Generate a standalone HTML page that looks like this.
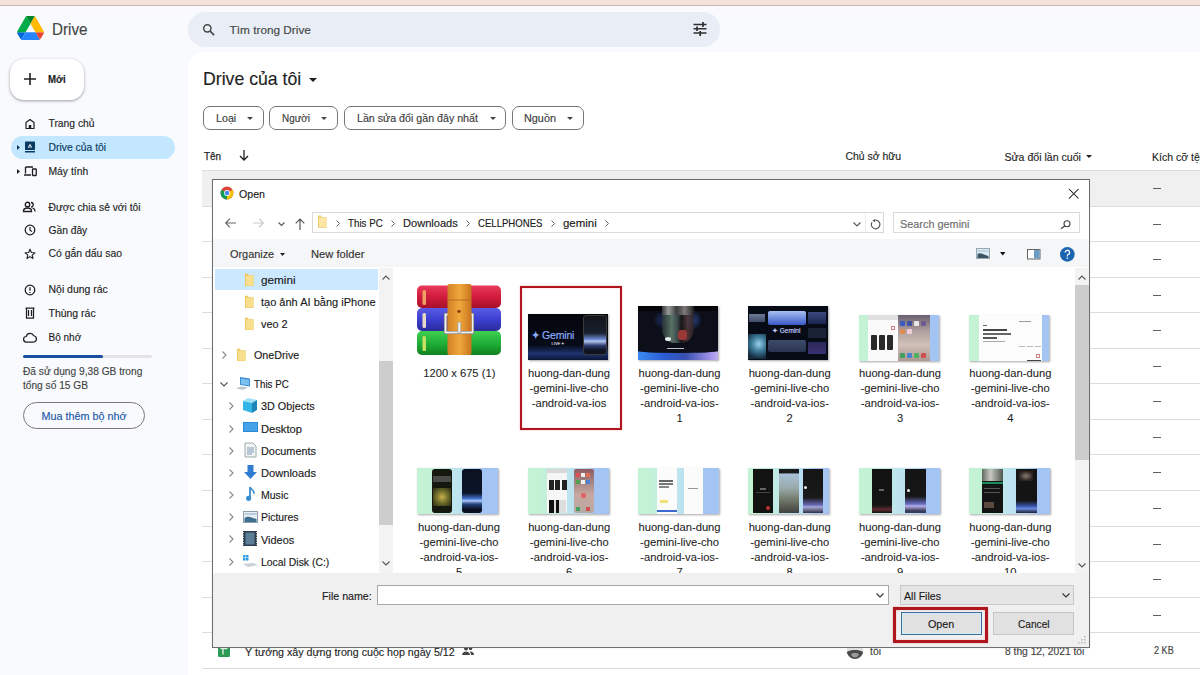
<!DOCTYPE html><html><head><meta charset="utf-8"><style>
*{margin:0;padding:0;box-sizing:border-box}
html,body{width:1200px;height:675px;overflow:hidden}
body{position:relative;background:#f8fafd;font-family:"Liberation Sans",sans-serif;color:#1f1f1f}
.a{position:absolute}
.t{position:absolute;white-space:nowrap;line-height:1;-webkit-text-stroke:0.15px currentColor}
svg{position:absolute;overflow:visible}
</style></head><body>
<div class="a" style="left:0px;top:0px;width:1200px;height:5px;background:#f4e2d8"></div>
<div class="a" style="left:0px;top:5px;width:1200px;height:1px;background:#c4b8b8"></div>
<div class="a" style="left:0px;top:6px;width:1200px;height:4px;background:#fbf9fd"></div>
<svg style="left:17px;top:16px" width="27" height="24" viewBox="0 0 87.3 78">
<path d="m6.6 66.85 3.85 6.65c.8 1.4 1.95 2.5 3.3 3.3l13.75-23.8h-27.5c0 1.550.4 3.1 1.2 4.5z" fill="#0066da"/>
<path d="m43.65 25-13.75-23.8c-1.35.8-2.5 1.9-3.3 3.3l-25.4 44a9.06 9.06 0 0 0 -1.2 4.5h27.5z" fill="#00ac47"/>
<path d="m73.55 76.8c1.35-.8 2.5-1.9 3.3-3.3l1.6-2.750 7.65-13.25c.8-1.4 1.2-2.95 1.2-4.5h-27.502l5.852 11.5z" fill="#ea4335"/>
<path d="m43.65 25 13.75-23.8c-1.35-.8-2.9-1.2-4.5-1.2h-18.5c-1.6 0-3.15.45-4.5 1.2z" fill="#00832d"/>
<path d="m59.8 53h-32.3l-13.75 23.8c1.35.8 2.9 1.2 4.5 1.2h50.8c1.6 0 3.15-.45 4.5-1.2z" fill="#2684fc"/>
<path d="m73.4 26.5-12.7-22c-.8-1.4-1.950-2.5-3.3-3.3l-13.75 23.8 16.15 28h27.45c0-1.55-.4-3.1-1.2-4.5z" fill="#ffba00"/>
</svg>
<div class="t" style="left:52px;top:21.55px;font-size:15.9px;color:#444746;font-weight:normal;transform:scaleX(0.9568);transform-origin:0 0;">Drive</div>
<div class="a" style="left:10px;top:59px;width:74px;height:41px;background:#fff;border-radius:14px;box-shadow:0 1px 2px rgba(60,64,67,.3),0 1px 3px 1px rgba(60,64,67,.15)"></div>
<svg style="left:24px;top:73px" width="12" height="12" viewBox="0 0 12 12"><path d="M6 0v12M0 6h12" stroke="#1f1f1f" stroke-width="1.6"/></svg>
<div class="t" style="left:48.3px;top:75.30px;font-size:10px;color:#1f1f1f;font-weight:bold;transform:scaleX(0.9715);transform-origin:0 0;">Mới</div>
<div class="a" style="left:10.5px;top:135.5px;width:164.5px;height:23.5px;background:#c2e7ff;border-radius:12px"></div>
<div class="t" style="left:48.5px;top:119.43px;font-size:10.3px;color:#1f1f1f;font-weight:normal;">Trang chủ</div>
<div class="t" style="left:48.5px;top:142.79px;font-size:10.38px;color:#0b3a60;font-weight:normal;">Drive của tôi</div>
<div class="t" style="left:48.5px;top:166.81px;font-size:10.35px;color:#1f1f1f;font-weight:normal;">Máy tính</div>
<div class="t" style="left:48.5px;top:202.57px;font-size:10.24px;color:#1f1f1f;font-weight:normal;">Được chia sẻ với tôi</div>
<div class="t" style="left:48.5px;top:225.87px;font-size:10.24px;color:#1f1f1f;font-weight:normal;">Gần đây</div>
<div class="t" style="left:48.5px;top:249.47px;font-size:10.41px;color:#1f1f1f;font-weight:normal;">Có gắn dấu sao</div>
<div class="t" style="left:48.5px;top:285.04px;font-size:10.48px;color:#1f1f1f;font-weight:normal;">Nội dung rác</div>
<div class="t" style="left:48.5px;top:308.74px;font-size:10.48px;color:#1f1f1f;font-weight:normal;">Thùng rác</div>
<div class="t" style="left:48.5px;top:332.70px;font-size:10.0px;color:#1f1f1f;font-weight:normal;">Bộ nhớ</div>
<svg style="left:24px;top:117.5px" width="12" height="12" viewBox="0 0 24 24"><path d="M4 21V9l8-6 8 6v12H4z" fill="none" stroke="#1f1f1f" stroke-width="2.4" stroke-linejoin="round"/><rect x="9.5" y="14" width="5" height="7" fill="#1f1f1f"/></svg>
<svg style="left:24px;top:141px" width="12" height="12" viewBox="0 0 24 24"><rect x="2" y="1" width="20" height="17" rx="1" fill="#0b3a60"/><rect x="2" y="20" width="20" height="3" fill="#0b3a60"/><path d="M12 5.5l4.5 7.5h-9z" fill="#fff"/><circle cx="12" cy="11" r="1.3" fill="#0b3a60"/></svg>
<svg style="left:17px;top:144.5px" width="3" height="5" viewBox="0 0 3 5"><path d="M0 0l3 2.5-3 2.5z" fill="#0b3a60"/></svg>
<svg style="left:24px;top:165px" width="13" height="12" viewBox="0 0 26 24"><path d="M3 4h15M3 4v13M0 20h14" stroke="#1f1f1f" stroke-width="2.6" fill="none"/><rect x="17" y="8" width="7.5" height="13" rx="1" fill="none" stroke="#1f1f1f" stroke-width="2.6"/></svg>
<svg style="left:17px;top:168.5px" width="3" height="5" viewBox="0 0 3 5"><path d="M0 0l3 2.5-3 2.5z" fill="#1f1f1f"/></svg>
<svg style="left:23px;top:201px" width="13" height="12" viewBox="0 0 26 24"><circle cx="9" cy="7" r="4.5" fill="none" stroke="#1f1f1f" stroke-width="2.6"/><path d="M1 20c0-4 4-6 8-6s8 2 8 6v1H1z" fill="none" stroke="#1f1f1f" stroke-width="2.6"/><path d="M16 3a4.5 4.5 0 0 1 0 9M19 14c3 1 5 3 5 6v1" fill="none" stroke="#1f1f1f" stroke-width="2.6"/></svg>
<svg style="left:24px;top:224px" width="12" height="12" viewBox="0 0 24 24"><circle cx="12" cy="12" r="9.6" fill="none" stroke="#1f1f1f" stroke-width="2.5"/><path d="M12 6v6.5l4 2.5" fill="none" stroke="#1f1f1f" stroke-width="2.4"/></svg>
<svg style="left:24px;top:247.5px" width="12" height="12" viewBox="0 0 24 24"><path d="M12 2.5l2.7 6.6 7.1.5-5.4 4.6 1.7 6.9L12 17.3l-6.1 3.8 1.7-6.9L2.2 9.6l7.1-.5z" fill="none" stroke="#1f1f1f" stroke-width="2.2" stroke-linejoin="round"/></svg>
<svg style="left:24px;top:283.5px" width="12" height="12" viewBox="0 0 24 24"><circle cx="12" cy="12" r="9.6" fill="none" stroke="#1f1f1f" stroke-width="2.5"/><path d="M12 6.5v7M12 16v2" fill="none" stroke="#1f1f1f" stroke-width="2.6"/></svg>
<svg style="left:24px;top:307px" width="12" height="12" viewBox="0 0 24 24"><path d="M5 2h14v20H5zM9 6v12M15 6v12M3 2h18" fill="none" stroke="#1f1f1f" stroke-width="2.5"/></svg>
<svg style="left:22.5px;top:331.5px" width="14" height="11" viewBox="0 0 28 22"><path d="M7 20a5.5 5.5 0 0 1-.6-11A8 8 0 0 1 21.5 7.5 6.3 6.3 0 0 1 21 20z" fill="none" stroke="#1f1f1f" stroke-width="2.5" stroke-linejoin="round"/></svg>
<div class="a" style="left:23px;top:354.5px;width:129px;height:3px;background:#e3e3e3;border-radius:2px"></div>
<div class="a" style="left:23px;top:354.5px;width:80px;height:3px;background:#1a4fa0;border-radius:2px"></div>
<div class="t" style="left:23px;top:367.40px;font-size:10.19px;color:#444746;font-weight:normal;">Đã sử dụng 9,38 GB trong</div>
<div class="t" style="left:23px;top:381.41px;font-size:10.17px;color:#444746;font-weight:normal;">tổng số 15 GB</div>
<div class="a" style="left:23px;top:402px;width:122px;height:27px;border:1px solid #79747e;border-radius:14px"></div>
<div class="t" style="left:41.5px;top:411.36px;font-size:10.8px;color:#1d58a8;font-weight:normal;">Mua thêm bộ nhớ</div>
<div class="a" style="left:188px;top:12px;width:532px;height:34.5px;background:#e9eef6;border-radius:17px"></div>
<svg style="left:201.5px;top:22.5px" width="13.5" height="13.5" viewBox="0 0 24 24"><circle cx="9.5" cy="9.5" r="6.5" fill="none" stroke="#444746" stroke-width="2.6"/><path d="M14.5 14.5l7 7" stroke="#444746" stroke-width="2.8"/></svg>
<div class="t" style="left:229.6px;top:24.51px;font-size:11.8px;color:#444746;font-weight:normal;">Tìm trong Drive</div>
<svg style="left:693px;top:22px" width="14" height="14" viewBox="0 0 14 14"><path d="M0.5 2.5h13M0.5 6.7h13M0.5 11h13" stroke="#2f2f2f" stroke-width="1.5" fill="none"/><path d="M10 0v5M4 4.5v4.5M7.2 9v5" stroke="#2f2f2f" stroke-width="1.7"/></svg>
<div class="a" style="left:188px;top:52px;width:1012px;height:623px;background:#fff;border-top-left-radius:16px"></div>
<div class="t" style="left:203px;top:71.27px;font-size:17.7px;color:#1f1f1f;font-weight:normal;">Drive của tôi</div>
<svg style="left:308.5px;top:77.5px" width="8" height="4" viewBox="0 0 8 4"><path d="M0 0h8L4 4z" fill="#1f1f1f"/></svg>
<div class="a" style="left:202.5px;top:106px;width:61.19999999999999px;height:24px;border:1px solid #747775;border-radius:7px"></div>
<div class="t" style="left:215.8px;top:113.47px;font-size:10.6px;color:#3c3c3c;font-weight:normal;transform:scaleX(1.0080);transform-origin:0 0;">Loại</div>
<svg style="left:247px;top:116.5px" width="6" height="3" viewBox="0 0 6 3"><path d="M0 0h6L3 3z" fill="#444746"/></svg>
<div class="a" style="left:269.3px;top:106px;width:68.69999999999999px;height:24px;border:1px solid #747775;border-radius:7px"></div>
<div class="t" style="left:282.2px;top:113.47px;font-size:10.6px;color:#3c3c3c;font-weight:normal;transform:scaleX(0.9348);transform-origin:0 0;">Người</div>
<svg style="left:321px;top:116.5px" width="6" height="3" viewBox="0 0 6 3"><path d="M0 0h6L3 3z" fill="#444746"/></svg>
<div class="a" style="left:344.3px;top:106px;width:161.5px;height:24px;border:1px solid #747775;border-radius:7px"></div>
<div class="t" style="left:357px;top:113.47px;font-size:10.6px;color:#3c3c3c;font-weight:normal;transform:scaleX(1.0062);transform-origin:0 0;">Lần sửa đổi gần đây nhất</div>
<svg style="left:489.5px;top:116.5px" width="6" height="3" viewBox="0 0 6 3"><path d="M0 0h6L3 3z" fill="#444746"/></svg>
<div class="a" style="left:512.3px;top:106px;width:71.5px;height:24px;border:1px solid #747775;border-radius:7px"></div>
<div class="t" style="left:524px;top:113.47px;font-size:10.6px;color:#3c3c3c;font-weight:normal;transform:scaleX(1.0244);transform-origin:0 0;">Nguồn</div>
<svg style="left:567px;top:116.5px" width="6" height="3" viewBox="0 0 6 3"><path d="M0 0h6L3 3z" fill="#444746"/></svg>
<div class="t" style="left:203.5px;top:152.19px;font-size:10.2px;color:#1f1f1f;font-weight:normal;transform:scaleX(0.9671);transform-origin:0 0;-webkit-text-stroke:0.25px #1f1f1f">Tên</div>
<svg style="left:238.5px;top:150px" width="10" height="11" viewBox="0 0 10 11"><path d="M5 0v10M1 6l4 4 4-4" stroke="#1f1f1f" stroke-width="1.3" fill="none"/></svg>
<div class="t" style="left:845.4px;top:151.76px;font-size:10.44px;color:#1f1f1f;font-weight:normal;">Chủ sở hữu</div>
<div class="t" style="left:1004.4px;top:151.67px;font-size:10.6px;color:#1f1f1f;font-weight:normal;">Sửa đổi lần cuối</div>
<svg style="left:1086px;top:154.5px" width="6" height="3" viewBox="0 0 6 3"><path d="M0 0h6L3 3z" fill="#1f1f1f"/></svg>
<div class="t" style="left:1152px;top:151.72px;font-size:10.5px;color:#1f1f1f;font-weight:normal;">Kích cỡ tệp</div>
<div class="a" style="left:202px;top:171px;width:998px;height:35px;background:#f0f0f0"></div>
<div class="a" style="left:202px;top:170px;width:998px;height:1px;background:#dcdcdc"></div>
<div class="a" style="left:202px;top:206px;width:998px;height:1px;background:#dcdcdc"></div>
<div class="a" style="left:202px;top:241px;width:998px;height:1px;background:#dcdcdc"></div>
<div class="a" style="left:202px;top:277px;width:998px;height:1px;background:#dcdcdc"></div>
<div class="a" style="left:202px;top:312px;width:998px;height:1px;background:#dcdcdc"></div>
<div class="a" style="left:202px;top:348px;width:998px;height:1px;background:#dcdcdc"></div>
<div class="a" style="left:202px;top:383px;width:998px;height:1px;background:#dcdcdc"></div>
<div class="a" style="left:202px;top:419px;width:998px;height:1px;background:#dcdcdc"></div>
<div class="a" style="left:202px;top:454px;width:998px;height:1px;background:#dcdcdc"></div>
<div class="a" style="left:202px;top:490px;width:998px;height:1px;background:#dcdcdc"></div>
<div class="a" style="left:202px;top:526px;width:998px;height:1px;background:#dcdcdc"></div>
<div class="a" style="left:202px;top:561px;width:998px;height:1px;background:#dcdcdc"></div>
<div class="a" style="left:202px;top:597px;width:998px;height:1px;background:#dcdcdc"></div>
<div class="a" style="left:202px;top:632px;width:998px;height:1px;background:#dcdcdc"></div>
<div class="a" style="left:202px;top:668px;width:998px;height:1px;background:#dcdcdc"></div>
<div class="a" style="left:1153px;top:188px;width:8px;height:1px;background:#5f5f5f"></div>
<div class="a" style="left:1153px;top:224px;width:8px;height:1px;background:#5f5f5f"></div>
<div class="a" style="left:1153px;top:259px;width:8px;height:1px;background:#5f5f5f"></div>
<div class="a" style="left:1153px;top:295px;width:8px;height:1px;background:#5f5f5f"></div>
<div class="a" style="left:1153px;top:330px;width:8px;height:1px;background:#5f5f5f"></div>
<div class="a" style="left:1153px;top:366px;width:8px;height:1px;background:#5f5f5f"></div>
<div class="a" style="left:1153px;top:401px;width:8px;height:1px;background:#5f5f5f"></div>
<div class="a" style="left:1153px;top:437px;width:8px;height:1px;background:#5f5f5f"></div>
<div class="a" style="left:1153px;top:472px;width:8px;height:1px;background:#5f5f5f"></div>
<div class="a" style="left:1153px;top:508px;width:8px;height:1px;background:#5f5f5f"></div>
<div class="a" style="left:1153px;top:544px;width:8px;height:1px;background:#5f5f5f"></div>
<div class="a" style="left:1153px;top:579px;width:8px;height:1px;background:#5f5f5f"></div>
<div class="a" style="left:1153px;top:615px;width:8px;height:1px;background:#5f5f5f"></div>
<svg style="left:218px;top:645px" width="12" height="12" viewBox="0 0 12 12"><rect width="12" height="12" rx="1.5" fill="#2a9a55"/><path d="M2.5 3.5h7M5 3.5v6" stroke="#e8f5ea" stroke-width="1.3"/></svg>
<div class="t" style="left:245px;top:646.93px;font-size:10.67px;color:#1f1f1f;font-weight:normal;">Ý tưởng xây dựng trong cuộc họp ngày 5/12</div>
<svg style="left:461.5px;top:646px" width="12" height="9" viewBox="0 0 24 18"><circle cx="8" cy="5" r="4" fill="#444"/><path d="M0 18c0-4 4-7 8-7s8 3 8 7z" fill="#444"/><circle cx="17" cy="5" r="3.5" fill="#444"/><path d="M17 11c4 0 7 3 7 7h-6c0-3-1-5-3-6.5z" fill="#444"/></svg>
<svg style="left:845.5px;top:642px" width="18" height="17" viewBox="0 0 18 17"><circle cx="9" cy="8.5" r="8.5" fill="#e4e4e4"/><path d="M0.8 10c2.5-1.5 4.5-2 8.2-2s5.7.5 8.2 2c-1 4-4.3 7-8.2 7s-7.2-3-8.2-7z" fill="#4a4a4a"/><path d="M5 12c1.5-1 2.5-1 4-1s2.5 0 4 1c-.5 2-2 3.5-4 3.5s-3.5-1.5-4-3.5z" fill="#9a9a9a"/></svg>
<div class="t" style="left:870px;top:647.07px;font-size:10.41px;color:#444;font-weight:normal;">tôi</div>
<div class="t" style="left:1005.3px;top:647.13px;font-size:10.3px;color:#444;font-weight:normal;transform:scaleX(0.9962);transform-origin:0 0;">8 thg 12, 2021 tôi</div>
<div class="t" style="left:1153.5px;top:646.34px;font-size:10.3px;color:#444;font-weight:normal;transform:scaleX(0.8822);transform-origin:0 0;">2 KB</div>
<div class="a" style="left:212px;top:179px;width:878px;height:469px;background:#fff;border:1px solid #6d6d6d;box-shadow:0 0 2px rgba(0,0,0,.08)"></div>
<svg style="left:220px;top:186px" width="14" height="14" viewBox="0 0 48 48"><circle cx="24" cy="24" r="22" fill="#db4437"/><path d="M24 24L43 13A22 22 0 0 1 24 46z" fill="#f4c20d"/><path d="M24 24L24 46A22 22 0 0 1 5 13z" fill="#0f9d58"/><circle cx="24" cy="24" r="10" fill="#fff"/><circle cx="24" cy="24" r="7.5" fill="#4285f4"/></svg>
<div class="t" style="left:238.6px;top:189.03px;font-size:11.4px;color:#1a1a1a;font-weight:normal;transform:scaleX(0.9323);transform-origin:0 0;">Open</div>
<svg style="left:1069px;top:188.5px" width="9.5" height="9.5" viewBox="0 0 10 10"><path d="M0 0L10 10M10 0L0 10" stroke="#111" stroke-width="1.1"/></svg>
<svg style="left:225px;top:218px" width="11" height="10" viewBox="0 0 11 10"><path d="M0.5 5h10.5M5 0.7L0.7 5 5 9.3" stroke="#666" stroke-width="1.2" fill="none"/></svg>
<svg style="left:253px;top:218px" width="11" height="10" viewBox="0 0 11 10"><path d="M0 5h10.5M6 0.7L10.3 5 6 9.3" stroke="#c8c8c8" stroke-width="1.2" fill="none"/></svg>
<svg style="left:278px;top:221.5px" width="7" height="4.5" viewBox="0 0 7 4.5"><path d="M0.5 0.5l3 3 3-3" stroke="#555" stroke-width="1.1" fill="none"/></svg>
<svg style="left:294.5px;top:217.5px" width="10" height="12" viewBox="0 0 10 12"><path d="M5 12V1M0.7 5.3L5 1l4.3 4.3" stroke="#555" stroke-width="1.2" fill="none"/></svg>
<div class="a" style="left:312px;top:212px;width:572px;height:21px;border:1px solid #d9d9d9;background:#fff"></div>
<div class="a" style="left:865px;top:213px;width:1px;height:19px;background:#ececec"></div>
<svg style="left:317.5px;top:215px" width="8.5" height="13" viewBox="0 0 8.5 13"><path d="M0 0.5h3l1 1.5h4.5V13H0z" fill="#f0cd70"/><rect x="1" y="2.5" width="7.5" height="10" fill="#fbe6a6"/></svg>
<svg style="left:336px;top:219.5px" width="4" height="7" viewBox="0 0 4 7"><path d="M0.5 0.5l3 3-3 3" stroke="#666" stroke-width="1" fill="none"/></svg>
<div class="t" style="left:348px;top:217.93px;font-size:11.4px;color:#1a1a1a;font-weight:normal;transform:scaleX(0.8559);transform-origin:0 0;">This PC</div>
<svg style="left:390.8px;top:219.5px" width="4" height="7" viewBox="0 0 4 7"><path d="M0.5 0.5l3 3-3 3" stroke="#666" stroke-width="1" fill="none"/></svg>
<div class="t" style="left:402.8px;top:217.93px;font-size:11.4px;color:#1a1a1a;font-weight:normal;transform:scaleX(0.9716);transform-origin:0 0;">Downloads</div>
<svg style="left:466.2px;top:219.5px" width="4" height="7" viewBox="0 0 4 7"><path d="M0.5 0.5l3 3-3 3" stroke="#666" stroke-width="1" fill="none"/></svg>
<div class="t" style="left:478px;top:217.93px;font-size:11.4px;color:#1a1a1a;font-weight:normal;transform:scaleX(0.8414);transform-origin:0 0;">CELLPHONES</div>
<svg style="left:551.2px;top:219.5px" width="4" height="7" viewBox="0 0 4 7"><path d="M0.5 0.5l3 3-3 3" stroke="#666" stroke-width="1" fill="none"/></svg>
<div class="t" style="left:563px;top:217.93px;font-size:11.4px;color:#1a1a1a;font-weight:normal;transform:scaleX(1.0035);transform-origin:0 0;">gemini</div>
<svg style="left:605.4px;top:219.5px" width="4" height="7" viewBox="0 0 4 7"><path d="M0.5 0.5l3 3-3 3" stroke="#666" stroke-width="1" fill="none"/></svg>
<svg style="left:853px;top:221.5px" width="8" height="5" viewBox="0 0 8 5"><path d="M0.5 0.5l3.5 3.5 3.5-3.5" stroke="#555" stroke-width="1.1" fill="none"/></svg>
<svg style="left:869.5px;top:218.5px" width="11" height="11" viewBox="0 0 11 11"><path d="M5.5 1.2A4.3 4.3 0 1 1 2 3.2" stroke="#555" stroke-width="1.2" fill="none"/><path d="M5.2 0v3.2L2.2 1.6z" fill="#555"/></svg>
<div class="a" style="left:893px;top:212px;width:187px;height:21px;border:1px solid #d9d9d9;background:#fff"></div>
<div class="t" style="left:900.4px;top:218.53px;font-size:11.4px;color:#6d6d6d;font-weight:normal;transform:scaleX(0.9551);transform-origin:0 0;">Search gemini</div>
<svg style="left:1060px;top:219.5px" width="11" height="9" viewBox="0 0 11 9"><circle cx="7" cy="3.8" r="3" stroke="#444" stroke-width="1.1" fill="none"/><path d="M4.8 6L1 8.8" stroke="#444" stroke-width="1.3"/></svg>
<div class="a" style="left:213px;top:239px;width:876px;height:28px;background:#f5f6f7"></div>
<div class="t" style="left:229.5px;top:249.23px;font-size:11.4px;color:#333;font-weight:normal;transform:scaleX(0.9555);transform-origin:0 0;">Organize</div>
<svg style="left:279.5px;top:252.5px" width="5" height="3" viewBox="0 0 5 3"><path d="M0 0h5L2.5 3z" fill="#222"/></svg>
<div class="t" style="left:311px;top:249.23px;font-size:11.4px;color:#333;font-weight:normal;transform:scaleX(0.9818);transform-origin:0 0;">New folder</div>
<svg style="left:976px;top:248px" width="14" height="11" viewBox="0 0 14 11"><rect x="0.5" y="0.5" width="13" height="10" fill="#dbe9f2" stroke="#9aa6ad"/><path d="M1.5 6c3-2 6 1 11 2v2H1.5z" fill="#3b5564"/><path d="M1.5 3h11" stroke="#b9cfdc" stroke-width="1.5"/></svg>
<svg style="left:1000px;top:252px" width="5.5" height="3.5" viewBox="0 0 5.5 3.5"><path d="M0 0h5.5L2.75 3.5z" fill="#111"/></svg>
<svg style="left:1026.5px;top:248.5px" width="13.5" height="10.5" viewBox="0 0 13.5 10.5"><rect x="0.5" y="0.5" width="12.5" height="9.5" fill="#fff" stroke="#666"/><rect x="7" y="1" width="5.5" height="8.5" fill="#6a9bc4"/></svg>
<svg style="left:1060.3px;top:246.6px" width="14.7" height="14.7" viewBox="0 0 20 20"><circle cx="10" cy="10" r="10" fill="#1b64b0"/><path d="M7 7.5a3 3 0 1 1 4.2 2.7c-.9.5-1.2 1-1.2 2v.8" stroke="#fff" stroke-width="1.8" fill="none"/><circle cx="10" cy="15.3" r="1.1" fill="#fff"/></svg>
<div class="a" style="left:379px;top:268px;width:14px;height:305px;background:#f3f3f3"></div>
<div class="a" style="left:379px;top:361px;width:14px;height:164px;background:#cdcdcd"></div>
<svg style="left:382px;top:274.5px" width="8" height="5" viewBox="0 0 8 5"><path d="M0.5 4.5L4 1l3.5 3.5" stroke="#555" stroke-width="1.1" fill="none"/></svg>
<svg style="left:382px;top:561px" width="8" height="5" viewBox="0 0 8 5"><path d="M0.5 0.5L4 4l3.5-3.5" stroke="#555" stroke-width="1.1" fill="none"/></svg>
<div class="a" style="left:214.5px;top:268.5px;width:163.5px;height:21.5px;background:#cce8ff"></div>
<svg style="left:244.5px;top:273px" width="8.5" height="13" viewBox="0 0 9 15" preserveAspectRatio="none"><path d="M0 1h3l1 1.5h5V15H0z" fill="#eec660"/><rect x="1" y="3" width="8" height="11.5" fill="#f8df8e"/></svg>
<div class="t" style="left:260.7px;top:275.23px;font-size:11.4px;color:#1a1a1a;font-weight:normal;transform:scaleX(1.0303);transform-origin:0 0;">gemini</div>
<svg style="left:244.5px;top:295px" width="8.5" height="13" viewBox="0 0 9 15" preserveAspectRatio="none"><path d="M0 1h3l1 1.5h5V15H0z" fill="#eec660"/><rect x="1" y="3" width="8" height="11.5" fill="#f8df8e"/></svg>
<div class="t" style="left:260.7px;top:297.23px;font-size:11.4px;color:#1a1a1a;font-weight:normal;transform:scaleX(0.9668);transform-origin:0 0;">tạo ảnh AI bằng iPhone</div>
<svg style="left:244.5px;top:317px" width="8.5" height="13" viewBox="0 0 9 15" preserveAspectRatio="none"><path d="M0 1h3l1 1.5h5V15H0z" fill="#eec660"/><rect x="1" y="3" width="8" height="11.5" fill="#f8df8e"/></svg>
<div class="t" style="left:260.7px;top:319.23px;font-size:11.4px;color:#1a1a1a;font-weight:normal;transform:scaleX(0.9538);transform-origin:0 0;">veo 2</div>
<svg style="left:237.2px;top:348px" width="8.5" height="13" viewBox="0 0 9 15" preserveAspectRatio="none"><path d="M0 1h3l1 1.5h5V15H0z" fill="#eec660"/><rect x="1" y="3" width="8" height="11.5" fill="#f8df8e"/></svg>
<svg style="left:221.5px;top:350.7px" width="5" height="8" viewBox="0 0 5 8"><path d="M0.5 0.5L4 4l-3.5 3.5" stroke="#8a8a8a" stroke-width="1.1" fill="none"/></svg>
<div class="t" style="left:254px;top:349.93px;font-size:11.4px;color:#1a1a1a;font-weight:normal;transform:scaleX(0.9408);transform-origin:0 0;">OneDrive</div>
<svg style="left:220px;top:381.5px" width="8" height="5" viewBox="0 0 8 5"><path d="M0.5 0.5L4 4l3.5-3.5" stroke="#555" stroke-width="1.1" fill="none"/></svg>
<svg style="left:236px;top:376px" width="15" height="14" viewBox="0 0 15 14"><path d="M4 1l10 1.5v8L4 9z" fill="#3d8ed8"/><path d="M5 2.5l8 1.2v5.5L5 8.2z" fill="#7cc0f0"/><path d="M0 12.5l5-2 7 1.2-5 2z" fill="#b6c2cc"/></svg>
<div class="t" style="left:254px;top:379.23px;font-size:11.4px;color:#1a1a1a;font-weight:normal;transform:scaleX(0.8559);transform-origin:0 0;">This PC</div>
<svg style="left:229px;top:402px" width="5" height="8" viewBox="0 0 5 8"><path d="M0.5 0.5L4 4l-3.5 3.5" stroke="#8a8a8a" stroke-width="1.1" fill="none"/></svg>
<div class="t" style="left:261.3px;top:401.23px;font-size:11.4px;color:#1a1a1a;font-weight:normal;transform:scaleX(0.9505);transform-origin:0 0;">3D Objects</div>
<svg style="left:229px;top:424.5px" width="5" height="8" viewBox="0 0 5 8"><path d="M0.5 0.5L4 4l-3.5 3.5" stroke="#8a8a8a" stroke-width="1.1" fill="none"/></svg>
<div class="t" style="left:261.3px;top:423.73px;font-size:11.4px;color:#1a1a1a;font-weight:normal;transform:scaleX(0.9803);transform-origin:0 0;">Desktop</div>
<svg style="left:229px;top:446.5px" width="5" height="8" viewBox="0 0 5 8"><path d="M0.5 0.5L4 4l-3.5 3.5" stroke="#8a8a8a" stroke-width="1.1" fill="none"/></svg>
<div class="t" style="left:261.3px;top:445.73px;font-size:11.4px;color:#1a1a1a;font-weight:normal;transform:scaleX(0.9539);transform-origin:0 0;">Documents</div>
<svg style="left:229px;top:468.7px" width="5" height="8" viewBox="0 0 5 8"><path d="M0.5 0.5L4 4l-3.5 3.5" stroke="#8a8a8a" stroke-width="1.1" fill="none"/></svg>
<div class="t" style="left:261.3px;top:467.93px;font-size:11.4px;color:#1a1a1a;font-weight:normal;transform:scaleX(0.9752);transform-origin:0 0;">Downloads</div>
<svg style="left:229px;top:490.8px" width="5" height="8" viewBox="0 0 5 8"><path d="M0.5 0.5L4 4l-3.5 3.5" stroke="#8a8a8a" stroke-width="1.1" fill="none"/></svg>
<div class="t" style="left:261.3px;top:490.03px;font-size:11.4px;color:#1a1a1a;font-weight:normal;transform:scaleX(0.9237);transform-origin:0 0;">Music</div>
<svg style="left:229px;top:513px" width="5" height="8" viewBox="0 0 5 8"><path d="M0.5 0.5L4 4l-3.5 3.5" stroke="#8a8a8a" stroke-width="1.1" fill="none"/></svg>
<div class="t" style="left:261.3px;top:512.23px;font-size:11.4px;color:#1a1a1a;font-weight:normal;transform:scaleX(0.9106);transform-origin:0 0;">Pictures</div>
<svg style="left:229px;top:535.4px" width="5" height="8" viewBox="0 0 5 8"><path d="M0.5 0.5L4 4l-3.5 3.5" stroke="#8a8a8a" stroke-width="1.1" fill="none"/></svg>
<div class="t" style="left:261.3px;top:534.63px;font-size:11.4px;color:#1a1a1a;font-weight:normal;transform:scaleX(0.9581);transform-origin:0 0;">Videos</div>
<svg style="left:229px;top:557.6px" width="5" height="8" viewBox="0 0 5 8"><path d="M0.5 0.5L4 4l-3.5 3.5" stroke="#8a8a8a" stroke-width="1.1" fill="none"/></svg>
<div class="t" style="left:261.3px;top:556.83px;font-size:11.4px;color:#1a1a1a;font-weight:normal;transform:scaleX(0.9151);transform-origin:0 0;">Local Disk (C:)</div>
<svg style="left:243px;top:398px" width="14" height="15" viewBox="0 0 14 15"><path d="M0 3l5-3 9 2-5 3z" fill="#9de0f5"/><path d="M0 3l9 2v10L0 12z" fill="#33b5e5"/><path d="M9 5l5-3v10l-5 3z" fill="#1c86b8"/></svg>
<svg style="left:243px;top:422px" width="15" height="12" viewBox="0 0 15 12"><rect width="15" height="10" fill="#2a8ad8"/><rect x="1" y="1" width="13" height="8" fill="#45a2e8"/></svg>
<svg style="left:244.5px;top:443px" width="11" height="14" viewBox="0 0 11 14"><path d="M0 0h8l3 3v11H0z" fill="#f4f4f4" stroke="#9aa" stroke-width="1"/><path d="M2 5h7M2 7h7M2 9h7M2 11h5" stroke="#6a8fae" stroke-width="0.9"/></svg>
<svg style="left:244px;top:465px" width="13" height="14" viewBox="0 0 13 14"><path d="M3.5 0h6v7H13L6.5 14 0 7h3.5z" fill="#2f7dd0"/></svg>
<svg style="left:246px;top:487px" width="9" height="14" viewBox="0 0 9 14"><path d="M4 0v10.5" stroke="#3a8fd0" stroke-width="1.8"/><circle cx="2.6" cy="11.3" r="2.6" fill="#3a8fd0"/><path d="M4 0c1 3 5 3 4 7" stroke="#3a8fd0" stroke-width="1.4" fill="none"/></svg>
<svg style="left:243px;top:511px" width="15" height="12" viewBox="0 0 15 12"><rect x="0.5" y="0.5" width="14" height="11" fill="#e8eef3" stroke="#8fa0ad"/><path d="M1.5 7c4-3 7 0 12 1v3h-12z" fill="#3e6f8e"/><path d="M1.5 3h12" stroke="#a9c4d6" stroke-width="1.5"/></svg>
<svg style="left:243px;top:531px" width="14" height="15" viewBox="0 0 14 15"><rect width="14" height="15" fill="#2c3e50"/><rect x="2.5" y="1.5" width="9" height="12" fill="#5c7d96"/><path d="M0.5 1v13M13.5 1v13" stroke="#ccc" stroke-width="1" stroke-dasharray="1 1.5"/></svg>
<svg style="left:242px;top:555px" width="16" height="13" viewBox="0 0 16 13"><path d="M1 9l10-1 5 2-10 2z" fill="#c9d1d8"/><rect x="1" y="0" width="2.5" height="2.5" fill="#2e9ce0"/><rect x="4" y="0" width="2.5" height="2.5" fill="#2e9ce0"/><rect x="1" y="3" width="2.5" height="2.5" fill="#2e9ce0"/><rect x="4" y="3" width="2.5" height="2.5" fill="#2e9ce0"/></svg>
<div class="a" style="left:1074.5px;top:268px;width:14px;height:305px;background:#f3f3f3"></div>
<div class="a" style="left:1074.5px;top:285px;width:14px;height:175px;background:#cdcdcd"></div>
<svg style="left:1077.5px;top:274.5px" width="8" height="5" viewBox="0 0 8 5"><path d="M0.5 4.5L4 1l3.5 3.5" stroke="#555" stroke-width="1.1" fill="none"/></svg>
<svg style="left:1077.5px;top:562.5px" width="8" height="5" viewBox="0 0 8 5"><path d="M0.5 0.5L4 4l3.5-3.5" stroke="#555" stroke-width="1.1" fill="none"/></svg>
<div class="a" style="left:0;top:0;width:1074px;height:572.5px;overflow:hidden">
<svg style="left:416.5px;top:283.5px" width="84" height="71" viewBox="0 0 84 71">
<defs><linearGradient id="gr" x1="0" y1="0" x2="0" y2="1"><stop offset="0" stop-color="#e83a5a"/><stop offset=".5" stop-color="#d21c3c"/><stop offset="1" stop-color="#a8102c"/></linearGradient>
<linearGradient id="gb" x1="0" y1="0" x2="0" y2="1"><stop offset="0" stop-color="#5a5ce6"/><stop offset=".5" stop-color="#3c3ed0"/><stop offset="1" stop-color="#2a2a9a"/></linearGradient>
<linearGradient id="gg" x1="0" y1="0" x2="0" y2="1"><stop offset="0" stop-color="#40d050"/><stop offset=".5" stop-color="#20b038"/><stop offset="1" stop-color="#108020"/></linearGradient>
<linearGradient id="go" x1="0" y1="0" x2="1" y2="0"><stop offset="0" stop-color="#d08028"/><stop offset=".5" stop-color="#f0a83a"/><stop offset="1" stop-color="#c87420"/></linearGradient></defs>
<rect x="0" y="1.5" width="84" height="22.5" rx="5" fill="url(#gr)"/>
<rect x="0" y="24" width="84" height="23" rx="5" fill="url(#gb)"/>
<rect x="0" y="47" width="84" height="24" rx="5" fill="url(#gg)"/>
<rect x="5.5" y="6" width="3.5" height="15" rx="1.5" fill="#f0a060"/><rect x="5.5" y="29" width="3.5" height="15" rx="1.5" fill="#e8d8c8"/><rect x="5.5" y="52" width="3.5" height="15" rx="1.5" fill="#c8e060"/>
<rect x="30.5" y="0" width="24" height="71" rx="2" fill="url(#go)"/>
<path d="M30.5 16h24" stroke="#b86a20" stroke-width="1"/>
<rect x="28.5" y="30.5" width="27" height="18" fill="none" stroke="#6a6a6a" stroke-width="3.2"/>
<rect x="28.5" y="30.5" width="27" height="18" fill="none" stroke="#eeeeee" stroke-width="2"/>
<rect x="30.5" y="28" width="24" height="19" fill="url(#go)"/>
<rect x="40.8" y="38" width="3" height="11" rx="1" fill="#eee" stroke="#888" stroke-width=".6"/>
<circle cx="42" cy="27.3" r="1.6" fill="#8a3a10"/>
</svg>
<div class="t" style="left:399.3px;width:120px;text-align:center;top:367.84px;font-size:11.2px;color:#1e1e1e;-webkit-text-stroke:0.08px #1e1e1e">1200 x 675 (1)</div>
<div class="a" style="left:527.6px;top:314px;width:80.5px;height:45.5px;overflow:hidden;box-shadow:1px 1px 2px rgba(0,0,0,.35)"><div class="a" style="left:0px;top:0px;width:80.5px;height:45.5px;background:linear-gradient(180deg,#04060c 0%,#070b18 68%,#1d3470 86%,#0c1636 100%)"></div><div class="t" style="left:3px;top:16px;font-size:10.5px;color:#8fb0ff;letter-spacing:-0.2px">✦ Gemini</div><div class="t" style="left:24px;top:28px;font-size:4px;color:#ccd">LIVE ✦</div><div class="a" style="left:55px;top:1px;width:24px;height:40px;border:1px solid #3a3a3a;border-radius:3px;background:linear-gradient(180deg,#121418 0%,#1a2030 45%,#6f8fd8 62%,#b8c8f0 66%,#2a3a70 78%,#101420 90%)"></div></div>
<div class="a" style="left:637.5px;top:306.3px;width:80px;height:53.7px;overflow:hidden;box-shadow:1px 1px 2px rgba(0,0,0,.35)"><div class="a" style="left:0px;top:0px;width:80px;height:53.7px;background:#0c0f1a"></div><div class="a" style="left:0px;top:0px;width:80px;height:5px;background:#060608"></div><div class="a" style="left:16px;top:6px;width:16px;height:16px;border-radius:50%;background:radial-gradient(#1a2850 0%,#141c38 50%,rgba(12,15,26,0) 72%)"></div><div class="a" style="left:44px;top:4px;width:20px;height:20px;border-radius:50%;background:radial-gradient(#24407a 0%,#1a2850 40%,rgba(12,15,26,0) 72%)"></div><div class="a" style="left:24px;top:0px;width:32px;height:37px;border-radius:0 0 40% 40%;opacity:.8;background:linear-gradient(90deg,#2a3434 0%,#6a8a78 30%,#4a5a58 48%,#1a1818 60%,#5a3a38 80%,#2a2424 100%)"></div><div class="a" style="left:24px;top:0px;width:32px;height:9px;opacity:.8;background:linear-gradient(90deg,#3a3a3a,#a8a8a8 20%,#383838 45%,#909090 70%,#202020)"></div><div class="a" style="left:40px;top:24px;width:9px;height:10px;border-radius:35%;background:#9a3838"></div><div class="a" style="left:27px;top:31px;width:6px;height:3.5px;border-radius:50%;background:#e4e8f0"></div><div class="a" style="left:29.5px;top:41.5px;width:17px;height:2px;background:#b8c0d0"></div><div class="a" style="left:0px;top:44px;width:80px;height:9.700000000000003px;background:linear-gradient(90deg,#3a8af0 0%,#2a5ad0 35%,#3a50b0 60%,#a090e8 90%,#c0b0f0 100%)"></div><div class="a" style="left:0px;top:43px;width:80px;height:4px;border-radius:0 0 50% 50%;background:#0c0f1a"></div></div>
<div class="a" style="left:748px;top:306.4px;width:79.6px;height:53.2px;overflow:hidden;box-shadow:1px 1px 2px rgba(0,0,0,.35)"><div class="a" style="left:0px;top:0px;width:79.6px;height:53.2px;background:#070b16"></div><div class="a" style="left:20px;top:5px;width:38px;height:14px;background:linear-gradient(180deg,#a8c0f0,#3a58c8);border-radius:2px"></div><div class="a" style="left:1px;top:8px;width:16px;height:8px;background:linear-gradient(#9aa8c8,#5a6890);opacity:.7"></div><div class="a" style="left:60px;top:6px;width:18px;height:12px;background:linear-gradient(#3a4a80,#1a2450)"></div><div class="t" style="left:24px;top:22px;font-size:6.5px;color:#c8d4ff">✦ Gemini</div><div class="a" style="left:60px;top:22px;width:18px;height:10px;background:#1a2236"></div><div class="a" style="left:0px;top:28px;width:18px;height:25px;background:radial-gradient(circle at 60% 40%,#9ad0e8 0%,#3a7898 40%,#152a3a 80%)"></div><div class="a" style="left:20px;top:34px;width:38px;height:12px;background:linear-gradient(#3c4c6c,#2a3450);border-radius:2px"></div><div class="a" style="left:60px;top:36px;width:18px;height:12px;background:linear-gradient(#2a2a5a,#3a3070)"></div></div>
<div class="a" style="left:858.5px;top:314.5px;width:80.8px;height:46px;overflow:hidden;box-shadow:1px 1px 2px rgba(0,0,0,.35)"><div class="a" style="left:0px;top:0px;width:80.8px;height:46px;background:linear-gradient(90deg,#c4f2d4 0%,#c4f2d4 12%,#bfe6ee 45%,#b6daf2 72%,#a4c4f4 80%,#a4c4f4 100%)"></div><div class="a" style="left:9px;top:0px;width:30px;height:46px;background:#fafafa"></div><div class="a" style="left:9px;top:0px;width:30px;height:5px;background:#e0e0e0"></div><div class="a" style="left:12px;top:20px;width:6px;height:15px;background:#2a2a2a;border-radius:1px"></div><div class="a" style="left:20px;top:20px;width:6px;height:15px;background:#2a2a2a;border-radius:1px"></div><div class="a" style="left:28px;top:20px;width:6px;height:15px;background:#2a2a2a;border-radius:1px"></div><div class="a" style="left:32px;top:11px;width:4px;height:4px;border:1px solid #d08080"></div><div class="a" style="left:39px;top:0px;width:32px;height:46px;background:linear-gradient(180deg,#6a6070 0%,#b0a0a0 35%,#d0c0b8 65%,#a89890 100%)"></div><div class="a" style="left:41px;top:6px;width:5px;height:5px;background:#3a5ac0;border-radius:1px"></div><div class="a" style="left:48px;top:6px;width:5px;height:5px;background:#4050a0;border-radius:1px"></div><div class="a" style="left:55px;top:6px;width:5px;height:5px;background:#e8e8e8;border-radius:1px"></div><div class="a" style="left:62px;top:6px;width:5px;height:5px;background:#705a90;border-radius:1px"></div><div class="a" style="left:41px;top:14px;width:5px;height:5px;background:#e08a50;border-radius:1px"></div><div class="a" style="left:48px;top:14px;width:5px;height:5px;background:#f0d0d8;border-radius:1px"></div><div class="a" style="left:41px;top:38px;width:5px;height:5px;background:#40a060;border-radius:1px"></div><div class="a" style="left:48px;top:38px;width:5px;height:5px;background:#4a80d0;border-radius:1px"></div><div class="a" style="left:55px;top:38px;width:5px;height:5px;background:#50b060;border-radius:1px"></div><div class="a" style="left:62px;top:38px;width:5px;height:5px;background:#d05050;border-radius:1px"></div></div>
<div class="a" style="left:968.7px;top:314.5px;width:80.3px;height:46px;overflow:hidden;box-shadow:1px 1px 2px rgba(0,0,0,.35)"><div class="a" style="left:0px;top:0px;width:80.3px;height:46px;background:linear-gradient(90deg,#c4f2d4 0%,#c4f2d4 12%,#bfe6ee 45%,#b6daf2 72%,#a4c4f4 80%,#a4c4f4 100%)"></div><div class="a" style="left:10px;top:0px;width:63px;height:46px;background:#fcfcfc"></div><div class="a" style="left:14px;top:10px;width:4px;height:1px;background:#666"></div><div class="a" style="left:14px;top:14px;width:24px;height:2px;background:#444"></div><div class="a" style="left:14px;top:18px;width:28px;height:2px;background:#666"></div><div class="a" style="left:14px;top:22px;width:14px;height:2px;background:#555"></div><div class="a" style="left:14px;top:26px;width:22px;height:1px;background:#aaa"></div><div class="a" style="left:50px;top:6px;width:12px;height:1.5px;background:#999"></div><div class="a" style="left:50px;top:31px;width:6px;height:1px;background:#bbb"></div><div class="a" style="left:58px;top:31px;width:6px;height:1px;background:#bbb"></div><div class="a" style="left:66px;top:31px;width:6px;height:1px;background:#bbb"></div><div class="a" style="left:67px;top:39px;width:4px;height:4px;border:1px solid #d08080"></div><div class="a" style="left:58px;top:45px;width:14px;height:1px;background:#444"></div></div>
<div class="t" style="left:509px;width:120px;text-align:center;top:367.84px;font-size:11.2px;color:#1e1e1e;-webkit-text-stroke:0.08px #1e1e1e">huong-dan-dung</div>
<div class="t" style="left:509px;width:120px;text-align:center;top:382.84px;font-size:11.2px;color:#1e1e1e;-webkit-text-stroke:0.08px #1e1e1e">-gemini-live-cho</div>
<div class="t" style="left:509px;width:120px;text-align:center;top:397.84px;font-size:11.2px;color:#1e1e1e;-webkit-text-stroke:0.08px #1e1e1e">-android-va-ios</div>
<div class="t" style="left:619.5px;width:120px;text-align:center;top:367.84px;font-size:11.2px;color:#1e1e1e;-webkit-text-stroke:0.08px #1e1e1e">huong-dan-dung</div>
<div class="t" style="left:619.5px;width:120px;text-align:center;top:382.84px;font-size:11.2px;color:#1e1e1e;-webkit-text-stroke:0.08px #1e1e1e">-gemini-live-cho</div>
<div class="t" style="left:619.5px;width:120px;text-align:center;top:397.84px;font-size:11.2px;color:#1e1e1e;-webkit-text-stroke:0.08px #1e1e1e">-android-va-ios-</div>
<div class="t" style="left:619.5px;width:120px;text-align:center;top:412.84px;font-size:11.2px;color:#1e1e1e;-webkit-text-stroke:0.08px #1e1e1e">1</div>
<div class="t" style="left:729.7px;width:120px;text-align:center;top:367.84px;font-size:11.2px;color:#1e1e1e;-webkit-text-stroke:0.08px #1e1e1e">huong-dan-dung</div>
<div class="t" style="left:729.7px;width:120px;text-align:center;top:382.84px;font-size:11.2px;color:#1e1e1e;-webkit-text-stroke:0.08px #1e1e1e">-gemini-live-cho</div>
<div class="t" style="left:729.7px;width:120px;text-align:center;top:397.84px;font-size:11.2px;color:#1e1e1e;-webkit-text-stroke:0.08px #1e1e1e">-android-va-ios-</div>
<div class="t" style="left:729.7px;width:120px;text-align:center;top:412.84px;font-size:11.2px;color:#1e1e1e;-webkit-text-stroke:0.08px #1e1e1e">2</div>
<div class="t" style="left:840px;width:120px;text-align:center;top:367.84px;font-size:11.2px;color:#1e1e1e;-webkit-text-stroke:0.08px #1e1e1e">huong-dan-dung</div>
<div class="t" style="left:840px;width:120px;text-align:center;top:382.84px;font-size:11.2px;color:#1e1e1e;-webkit-text-stroke:0.08px #1e1e1e">-gemini-live-cho</div>
<div class="t" style="left:840px;width:120px;text-align:center;top:397.84px;font-size:11.2px;color:#1e1e1e;-webkit-text-stroke:0.08px #1e1e1e">-android-va-ios-</div>
<div class="t" style="left:840px;width:120px;text-align:center;top:412.84px;font-size:11.2px;color:#1e1e1e;-webkit-text-stroke:0.08px #1e1e1e">3</div>
<div class="t" style="left:950.3px;width:120px;text-align:center;top:367.84px;font-size:11.2px;color:#1e1e1e;-webkit-text-stroke:0.08px #1e1e1e">huong-dan-dung</div>
<div class="t" style="left:950.3px;width:120px;text-align:center;top:382.84px;font-size:11.2px;color:#1e1e1e;-webkit-text-stroke:0.08px #1e1e1e">-gemini-live-cho</div>
<div class="t" style="left:950.3px;width:120px;text-align:center;top:397.84px;font-size:11.2px;color:#1e1e1e;-webkit-text-stroke:0.08px #1e1e1e">-android-va-ios-</div>
<div class="t" style="left:950.3px;width:120px;text-align:center;top:412.84px;font-size:11.2px;color:#1e1e1e;-webkit-text-stroke:0.08px #1e1e1e">4</div>
<div class="a" style="left:519.8px;top:286px;width:102.7px;height:144.3px;border:2.5px solid #b0161e;box-shadow:0 0 1.5px rgba(230,80,80,.5),inset 0 0 1.5px rgba(230,80,80,.5)"></div>
<div class="a" style="left:416.7px;top:468.4px;width:81px;height:46px;overflow:hidden;box-shadow:1px 1px 2px rgba(0,0,0,.35)"><div class="a" style="left:0px;top:0px;width:81px;height:46px;background:linear-gradient(90deg,#c4f2d4 0%,#c4f2d4 12%,#bfe6ee 45%,#b6daf2 72%,#a4c4f4 80%,#a4c4f4 100%)"></div><div class="a" style="left:15px;top:1px;width:20px;height:44px;background:#14180f;border-radius:3px"></div><div class="a" style="left:16px;top:8px;width:18px;height:6px;background:#4a4a48"></div><div class="a" style="left:16px;top:20px;width:18px;height:18px;background:radial-gradient(circle at 50% 50%,#c8b050 0%,#6a6a28 50%,#2a2a18 100%)"></div><div class="a" style="left:45px;top:1px;width:20px;height:44px;border-radius:3px;background:linear-gradient(180deg,#0b1020 0%,#0b1628 55%,#4878d8 68%,#a8c8f8 72%,#24407a 80%,#0b1020 92%)"></div></div>
<div class="a" style="left:527.8px;top:468.4px;width:81px;height:46px;overflow:hidden;box-shadow:1px 1px 2px rgba(0,0,0,.35)"><div class="a" style="left:0px;top:0px;width:81px;height:46px;background:linear-gradient(90deg,#c4f2d4 0%,#c4f2d4 12%,#bfe6ee 45%,#b6daf2 72%,#a4c4f4 80%,#a4c4f4 100%)"></div><div class="a" style="left:19.5px;top:1px;width:20px;height:44px;background:#f6f6f6"></div><div class="a" style="left:19.5px;top:1px;width:20px;height:4px;background:#d8d8d8"></div><div class="a" style="left:21px;top:12px;width:5px;height:10px;background:#222"></div><div class="a" style="left:27.5px;top:12px;width:5px;height:10px;background:#222"></div><div class="a" style="left:34px;top:12px;width:5px;height:10px;background:#222"></div><div class="a" style="left:21px;top:32px;width:17px;height:13px;background:linear-gradient(90deg,#111 30%,#ddd 30%,#ddd 40%,#111 40%,#111 60%,#ddd 60%)"></div><div class="a" style="left:46px;top:1px;width:20px;height:44px;border-radius:2px;background:linear-gradient(180deg,#905a60 0%,#a08080 25%,#c8a8a0 60%,#b8a8a0 100%)"></div><div class="a" style="left:48px;top:5px;width:4px;height:4px;background:#e05050"></div><div class="a" style="left:53px;top:5px;width:4px;height:4px;background:#f0f0f0"></div><div class="a" style="left:58px;top:5px;width:4px;height:4px;background:#e07050"></div><div class="a" style="left:48px;top:12px;width:4px;height:4px;background:#50a050"></div><div class="a" style="left:53px;top:12px;width:4px;height:4px;background:#f0f0f0"></div><div class="a" style="left:58px;top:12px;width:4px;height:4px;background:#5080d0"></div><div class="a" style="left:53px;top:25px;width:5px;height:5px;background:#e06060;border-radius:50%"></div><div class="a" style="left:48px;top:39px;width:4px;height:4px;background:#40a060"></div><div class="a" style="left:58px;top:39px;width:4px;height:4px;background:#d05050"></div></div>
<div class="a" style="left:637.6px;top:468.4px;width:81px;height:46px;overflow:hidden;box-shadow:1px 1px 2px rgba(0,0,0,.35)"><div class="a" style="left:0px;top:0px;width:81px;height:46px;background:linear-gradient(90deg,#c4f2d4 0%,#c4f2d4 12%,#bfe6ee 45%,#b6daf2 72%,#a4c4f4 80%,#a4c4f4 100%)"></div><div class="a" style="left:19px;top:0px;width:20px;height:46px;background:#fbfbfb"></div><div class="a" style="left:21px;top:12px;width:14px;height:1.5px;background:#666"></div><div class="a" style="left:21px;top:15px;width:14px;height:1.5px;background:#777"></div><div class="a" style="left:21px;top:18px;width:10px;height:1.5px;background:#888"></div><div class="a" style="left:22px;top:32px;width:8px;height:3px;background:#f0e070"></div><div class="a" style="left:19px;top:42px;width:20px;height:2px;background:#3a6ad0"></div><div class="a" style="left:46.5px;top:0px;width:19px;height:46px;background:#fbfbfb"></div><div class="a" style="left:50px;top:20px;width:10px;height:1px;background:#999"></div></div>
<div class="a" style="left:748px;top:468.4px;width:81px;height:46px;overflow:hidden;box-shadow:1px 1px 2px rgba(0,0,0,.35)"><div class="a" style="left:0px;top:0px;width:81px;height:46px;background:linear-gradient(90deg,#c4f2d4 0%,#c4f2d4 12%,#bfe6ee 45%,#b6daf2 72%,#a4c4f4 80%,#a4c4f4 100%)"></div><div class="a" style="left:5px;top:1px;width:20px;height:44px;background:#121212"></div><div class="a" style="left:12px;top:20px;width:6px;height:2px;background:#666"></div><div class="a" style="left:8px;top:24px;width:14px;height:1px;background:#444"></div><div class="a" style="left:18px;top:38px;width:4px;height:4px;background:#c03030;border-radius:50%"></div><div class="a" style="left:30.5px;top:1px;width:20.5px;height:44px;background:linear-gradient(180deg,#1a1a1a 0%,#1a1a1a 8%,#a8c0d8 12%,#98a8a8 45%,#707868 70%,#404040 100%)"></div><div class="a" style="left:54.5px;top:1px;width:20.5px;height:44px;background:linear-gradient(180deg,#141414 0%,#1a1a1a 65%,#6a6ab8 82%,#a8a8d8 86%,#303040 100%)"></div><div class="a" style="left:56px;top:18px;width:3px;height:3px;background:#eee;border-radius:50%"></div></div>
<div class="a" style="left:858.7px;top:468.4px;width:81px;height:46px;overflow:hidden;box-shadow:1px 1px 2px rgba(0,0,0,.35)"><div class="a" style="left:0px;top:0px;width:81px;height:46px;background:linear-gradient(90deg,#c4f2d4 0%,#c4f2d4 12%,#bfe6ee 45%,#b6daf2 72%,#a4c4f4 80%,#a4c4f4 100%)"></div><div class="a" style="left:13.3px;top:1px;width:20.5px;height:44px;background:linear-gradient(180deg,#121212 0%,#141414 82%,#5a2a30 92%,#141414 100%)"></div><div class="a" style="left:20px;top:21px;width:5px;height:2px;background:#666"></div><div class="a" style="left:46.6px;top:1px;width:20.5px;height:44px;background:linear-gradient(180deg,#141414 0%,#161616 62%,#6a70c8 80%,#b8b0e8 84%,#3a3a5a 95%)"></div><div class="a" style="left:48px;top:21px;width:3px;height:3px;background:#eee;border-radius:50%"></div></div>
<div class="a" style="left:968.8px;top:468.4px;width:81px;height:46px;overflow:hidden;box-shadow:1px 1px 2px rgba(0,0,0,.35)"><div class="a" style="left:0px;top:0px;width:81px;height:46px;background:linear-gradient(90deg,#c4f2d4 0%,#c4f2d4 12%,#bfe6ee 45%,#b6daf2 72%,#a4c4f4 80%,#a4c4f4 100%)"></div><div class="a" style="left:13.3px;top:1px;width:20.7px;height:44px;background:#141414"></div><div class="a" style="left:13.3px;top:1px;width:20.7px;height:12px;background:linear-gradient(90deg,#606860,#c8c8c0 40%,#505850)"></div><div class="a" style="left:13.3px;top:14px;width:20.7px;height:2px;background:#1a8a5a"></div><div class="a" style="left:15px;top:20px;width:16px;height:1px;background:#555"></div><div class="a" style="left:15px;top:24px;width:16px;height:1px;background:#555"></div><div class="a" style="left:15px;top:34px;width:10px;height:6px;background:#5a4a40"></div><div class="a" style="left:47px;top:1px;width:21px;height:44px;background:linear-gradient(180deg,#141414 0%,#141414 72%,#3a58b0 85%,#6a8ae0 90%,#202030 100%)"></div><div class="a" style="left:50px;top:3px;width:14px;height:10px;background:radial-gradient(#8a7a70,#2a2220 70%)"></div></div>
<div class="t" style="left:399px;width:120px;text-align:center;top:521.64px;font-size:11.2px;color:#1e1e1e;-webkit-text-stroke:0.08px #1e1e1e">huong-dan-dung</div>
<div class="t" style="left:399px;width:120px;text-align:center;top:536.64px;font-size:11.2px;color:#1e1e1e;-webkit-text-stroke:0.08px #1e1e1e">-gemini-live-cho</div>
<div class="t" style="left:399px;width:120px;text-align:center;top:551.64px;font-size:11.2px;color:#1e1e1e;-webkit-text-stroke:0.08px #1e1e1e">-android-va-ios-</div>
<div class="t" style="left:399px;width:120px;text-align:center;top:566.64px;font-size:11.2px;color:#1e1e1e;-webkit-text-stroke:0.08px #1e1e1e">5</div>
<div class="t" style="left:509.20000000000005px;width:120px;text-align:center;top:521.64px;font-size:11.2px;color:#1e1e1e;-webkit-text-stroke:0.08px #1e1e1e">huong-dan-dung</div>
<div class="t" style="left:509.20000000000005px;width:120px;text-align:center;top:536.64px;font-size:11.2px;color:#1e1e1e;-webkit-text-stroke:0.08px #1e1e1e">-gemini-live-cho</div>
<div class="t" style="left:509.20000000000005px;width:120px;text-align:center;top:551.64px;font-size:11.2px;color:#1e1e1e;-webkit-text-stroke:0.08px #1e1e1e">-android-va-ios-</div>
<div class="t" style="left:509.20000000000005px;width:120px;text-align:center;top:566.64px;font-size:11.2px;color:#1e1e1e;-webkit-text-stroke:0.08px #1e1e1e">6</div>
<div class="t" style="left:619.5px;width:120px;text-align:center;top:521.64px;font-size:11.2px;color:#1e1e1e;-webkit-text-stroke:0.08px #1e1e1e">huong-dan-dung</div>
<div class="t" style="left:619.5px;width:120px;text-align:center;top:536.64px;font-size:11.2px;color:#1e1e1e;-webkit-text-stroke:0.08px #1e1e1e">-gemini-live-cho</div>
<div class="t" style="left:619.5px;width:120px;text-align:center;top:551.64px;font-size:11.2px;color:#1e1e1e;-webkit-text-stroke:0.08px #1e1e1e">-android-va-ios-</div>
<div class="t" style="left:619.5px;width:120px;text-align:center;top:566.64px;font-size:11.2px;color:#1e1e1e;-webkit-text-stroke:0.08px #1e1e1e">7</div>
<div class="t" style="left:729.7px;width:120px;text-align:center;top:521.64px;font-size:11.2px;color:#1e1e1e;-webkit-text-stroke:0.08px #1e1e1e">huong-dan-dung</div>
<div class="t" style="left:729.7px;width:120px;text-align:center;top:536.64px;font-size:11.2px;color:#1e1e1e;-webkit-text-stroke:0.08px #1e1e1e">-gemini-live-cho</div>
<div class="t" style="left:729.7px;width:120px;text-align:center;top:551.64px;font-size:11.2px;color:#1e1e1e;-webkit-text-stroke:0.08px #1e1e1e">-android-va-ios-</div>
<div class="t" style="left:729.7px;width:120px;text-align:center;top:566.64px;font-size:11.2px;color:#1e1e1e;-webkit-text-stroke:0.08px #1e1e1e">8</div>
<div class="t" style="left:840px;width:120px;text-align:center;top:521.64px;font-size:11.2px;color:#1e1e1e;-webkit-text-stroke:0.08px #1e1e1e">huong-dan-dung</div>
<div class="t" style="left:840px;width:120px;text-align:center;top:536.64px;font-size:11.2px;color:#1e1e1e;-webkit-text-stroke:0.08px #1e1e1e">-gemini-live-cho</div>
<div class="t" style="left:840px;width:120px;text-align:center;top:551.64px;font-size:11.2px;color:#1e1e1e;-webkit-text-stroke:0.08px #1e1e1e">-android-va-ios-</div>
<div class="t" style="left:840px;width:120px;text-align:center;top:566.64px;font-size:11.2px;color:#1e1e1e;-webkit-text-stroke:0.08px #1e1e1e">9</div>
<div class="t" style="left:950.3px;width:120px;text-align:center;top:521.64px;font-size:11.2px;color:#1e1e1e;-webkit-text-stroke:0.08px #1e1e1e">huong-dan-dung</div>
<div class="t" style="left:950.3px;width:120px;text-align:center;top:536.64px;font-size:11.2px;color:#1e1e1e;-webkit-text-stroke:0.08px #1e1e1e">-gemini-live-cho</div>
<div class="t" style="left:950.3px;width:120px;text-align:center;top:551.64px;font-size:11.2px;color:#1e1e1e;-webkit-text-stroke:0.08px #1e1e1e">-android-va-ios-</div>
<div class="t" style="left:950.3px;width:120px;text-align:center;top:566.64px;font-size:11.2px;color:#1e1e1e;-webkit-text-stroke:0.08px #1e1e1e">10</div>
</div>
<div class="a" style="left:213px;top:572.5px;width:876px;height:74.5px;background:#f0f0f0"></div>
<div class="t" style="left:322.4px;top:590.73px;font-size:11.4px;color:#1a1a1a;font-weight:normal;transform:scaleX(0.9357);transform-origin:0 0;">File name:</div>
<div class="a" style="left:376.5px;top:584.5px;width:512px;height:20.5px;background:#fff;border:1px solid #a8a8a8"></div>
<svg style="left:876px;top:593px" width="8" height="5" viewBox="0 0 8 5"><path d="M0.5 0.5L4 4l3.5-3.5" stroke="#333" stroke-width="1.1" fill="none"/></svg>
<div class="a" style="left:900px;top:584.5px;width:174px;height:20.5px;background:#e5e5e5;border:1px solid #c9c9c9"></div>
<div class="t" style="left:903.9px;top:590.73px;font-size:11.4px;color:#1a1a1a;font-weight:normal;transform:scaleX(0.9272);transform-origin:0 0;">All Files</div>
<svg style="left:1062px;top:593px" width="8" height="5" viewBox="0 0 8 5"><path d="M0.5 0.5L4 4l3.5-3.5" stroke="#333" stroke-width="1.1" fill="none"/></svg>
<div class="a" style="left:901px;top:612px;width:80.5px;height:23px;background:#e1e1e1;border:1.7px solid #3f6e9e;box-shadow:inset 0 0 0 1px #d4ebf9"></div>
<div class="t" style="left:928px;top:618.93px;font-size:11.4px;color:#1a1a1a;font-weight:normal;transform:scaleX(0.9430);transform-origin:0 0;">Open</div>
<div class="a" style="left:993.4px;top:612px;width:80.5px;height:23px;background:#e1e1e1;border:1px solid #c6c6c6"></div>
<div class="t" style="left:1017.6px;top:618.93px;font-size:11.4px;color:#1a1a1a;font-weight:normal;transform:scaleX(0.8905);transform-origin:0 0;">Cancel</div>
<div class="a" style="left:892.5px;top:607px;width:95.5px;height:36px;border:3px solid #b0161e;box-shadow:0 0 1.5px rgba(230,80,80,.5),inset 0 0 1.5px rgba(230,80,80,.5)"></div>
<svg style="left:1076px;top:634px" width="10" height="10" viewBox="0 0 10 10"><g fill="#b8b8b8"><rect x="8" y="2" width="1.5" height="1.5"/><rect x="5" y="5" width="1.5" height="1.5"/><rect x="8" y="5" width="1.5" height="1.5"/><rect x="2" y="8" width="1.5" height="1.5"/><rect x="5" y="8" width="1.5" height="1.5"/><rect x="8" y="8" width="1.5" height="1.5"/></g></svg>
</body></html>
